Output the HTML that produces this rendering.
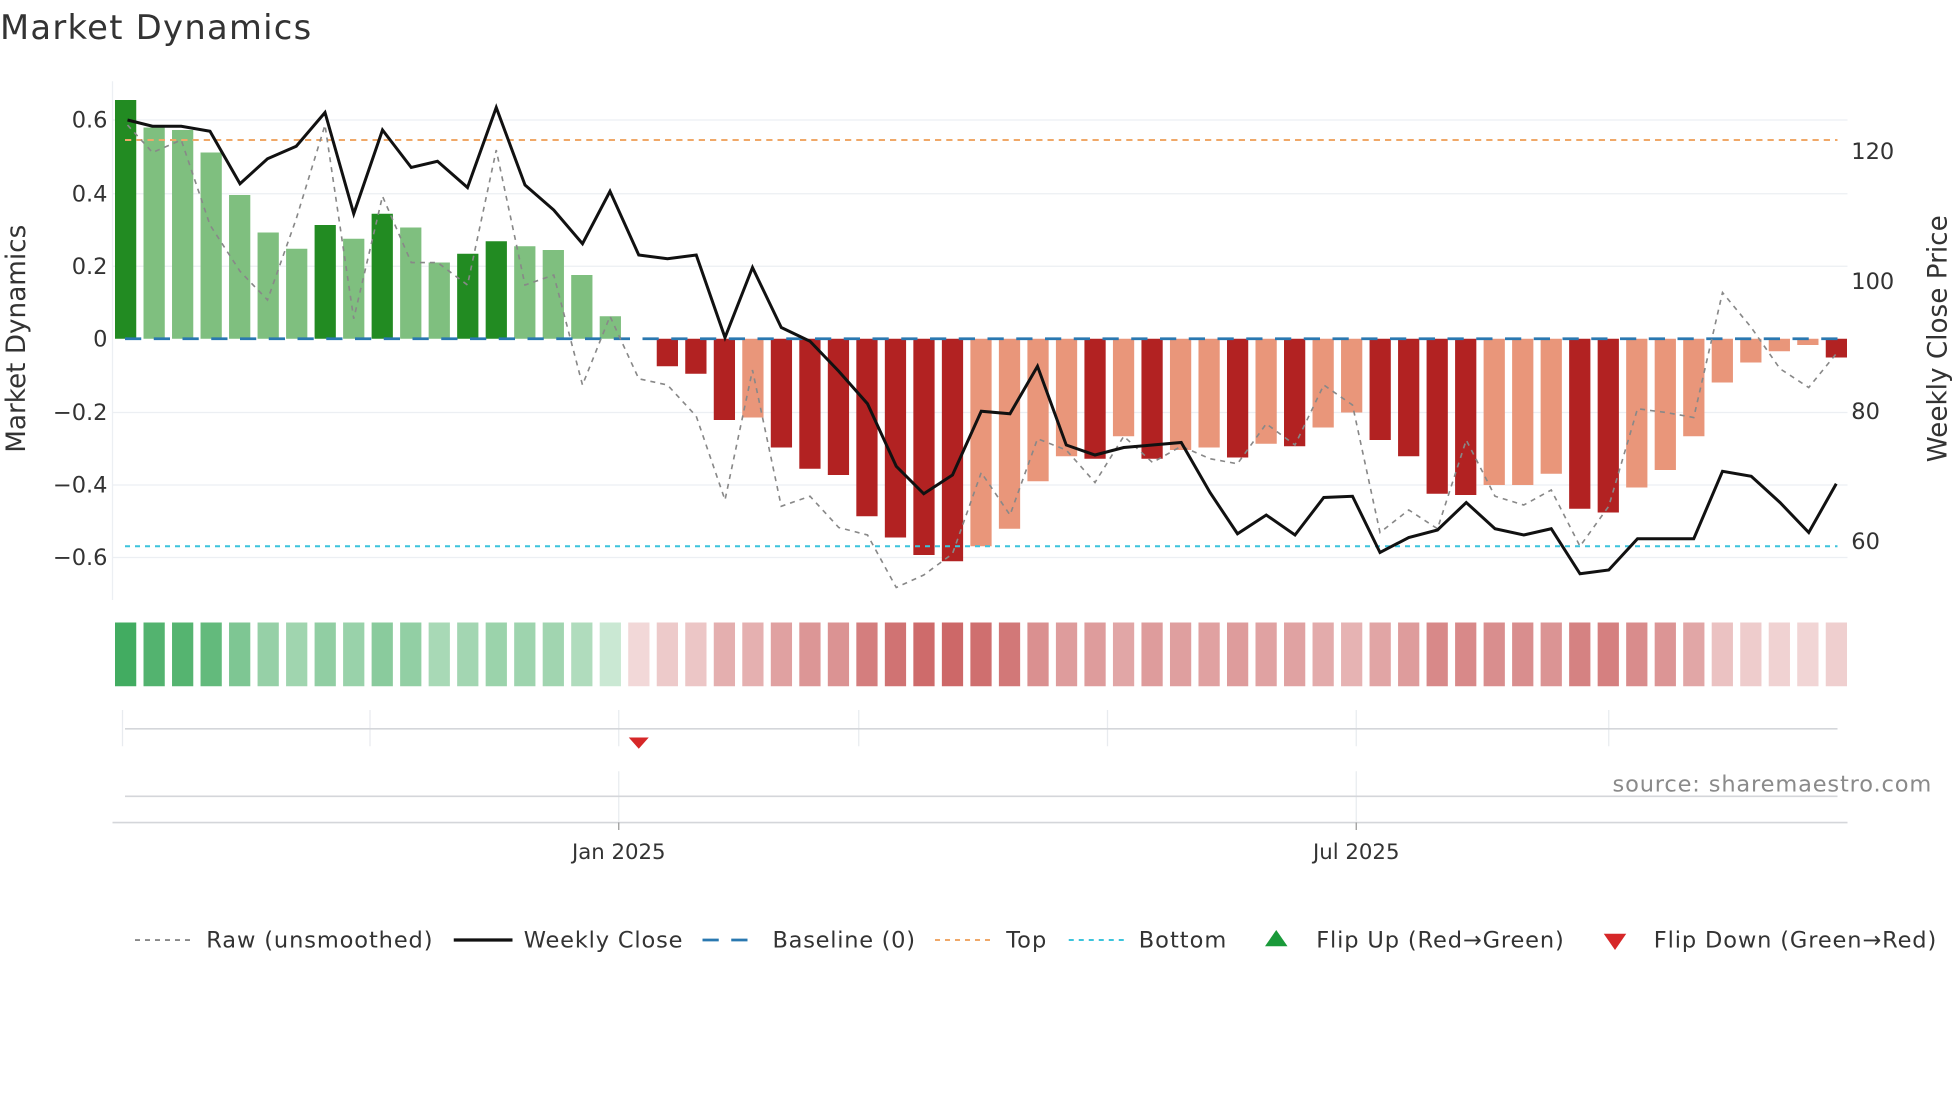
<!DOCTYPE html>
<html><head><meta charset="utf-8"><style>
html,body{margin:0;padding:0;background:#fff;width:1960px;height:1102px;overflow:hidden}
svg{display:block}
text{font-family:"DejaVu Sans","Liberation Sans",sans-serif;fill:#333}
</style></head><body>
<svg id="s" width="1960" height="1102" viewBox="0 0 1568 881.6" xmlns="http://www.w3.org/2000/svg">
<rect width="1568" height="882" fill="#fff"/>
<text x="0" y="31" font-size="27" textLength="249">Market Dynamics</text>
<g stroke="#eceff3" stroke-width="1">
<line x1="90" y1="96" x2="1478" y2="96"/><line x1="90" y1="155" x2="1478" y2="155"/>
<line x1="90" y1="213" x2="1478" y2="213"/><line x1="90" y1="330" x2="1478" y2="330"/>
<line x1="90" y1="388" x2="1478" y2="388"/><line x1="90" y1="446" x2="1478" y2="446"/>
<line x1="90" y1="65" x2="90" y2="480"/>
</g>
<g font-size="18" text-anchor="end">
<text x="86" y="102">0.6</text><text x="86" y="161">0.4</text><text x="86" y="219">0.2</text>
<text x="86" y="277">0</text><text x="86" y="336">−0.2</text><text x="86" y="394">−0.4</text><text x="86" y="452">−0.6</text>
</g>
<g font-size="18">
<text x="1481" y="127">120</text><text x="1481" y="231">100</text><text x="1481" y="335">80</text><text x="1481" y="439">60</text>
</g>
<text transform="translate(20,271) rotate(-90)" font-size="21" text-anchor="middle">Market Dynamics</text>
<text transform="translate(1557,271) rotate(-90)" font-size="21" text-anchor="middle">Weekly Close Price</text>
<g id="bars"></g>
<g id="heat"></g>
<line x1="100" y1="112" x2="1470" y2="112" stroke="#f0a868" stroke-width="1.6" stroke-dasharray="5,4"/>
<line x1="100" y1="437" x2="1470" y2="437" stroke="#3cc4dc" stroke-width="1.6" stroke-dasharray="4,4"/>
<line x1="100" y1="271" x2="1470" y2="271" stroke="#2a78b0" stroke-width="2.2" stroke-dasharray="13,10"/>
<polyline fill="none" stroke="#888" stroke-width="1.3" stroke-dasharray="4,4" points="102,100 122,122 145,112 168,180 192,217 214,240 237,175 260,100 283,255 306,157 329,210 350,210 374,228 397,120 420,228 443,220 466,308 488,253 511,303 534,308 557,333 580,400 602,296 625,405 648,397 671,422 694,428 717,470 739,460 762,443 785,378 808,412 830,351 853,360 876,386 899,349 922,370 945,357 968,367 990,371 1013,339 1036,356 1059,308 1082,324 1104,426 1127,408 1150,423 1173,352 1196,397 1219,404 1241,392 1264,437 1287,405 1310,327 1333,330 1355,334 1378,234 1401,262 1424,295 1447,310 1469,283"/>
<polyline fill="none" stroke="#111" stroke-width="2.4" stroke-linejoin="miter" points="102,96 122,101 145,101 168,105 192,147 214,127 237,117 260,90 283,171 306,104 329,134 350,129 374,150 397,86 420,148 443,168 466,195 488,153 511,204 534,207 557,204 580,270 602,214 625,262 648,273 671,297 694,323 717,373 739,395 762,380 785,329 808,331 830,293 853,356 876,364 899,358 922,356 945,354 968,394 990,427 1013,412 1036,428 1059,398 1082,397 1104,442 1127,430 1150,424 1173,402 1196,423 1219,428 1241,423 1264,459 1287,456 1310,431 1333,431 1355,431 1378,377 1401,381 1424,402 1447,426 1469,387"/>
<g stroke="#e8ebef" stroke-width="1">
<line x1="98" y1="568" x2="98" y2="597"/><line x1="296" y1="568" x2="296" y2="597"/><line x1="495" y1="568" x2="495" y2="597"/>
<line x1="687" y1="568" x2="687" y2="597"/><line x1="886" y1="568" x2="886" y2="597"/><line x1="1085" y1="568" x2="1085" y2="597"/><line x1="1287" y1="568" x2="1287" y2="597"/>
<line x1="495" y1="617" x2="495" y2="657"/><line x1="1085" y1="617" x2="1085" y2="657"/>
</g>
<line x1="100" y1="583" x2="1470" y2="583" stroke="#d4d6da" stroke-width="1.3"/>
<line x1="100" y1="637" x2="1470" y2="637" stroke="#d4d6da" stroke-width="1.3"/>
<line x1="90" y1="658" x2="1478" y2="658" stroke="#d4d6da" stroke-width="1.3"/>
<line x1="495" y1="658" x2="495" y2="664" stroke="#999"/><line x1="1085" y1="658" x2="1085" y2="664" stroke="#999"/>
<polygon points="503,590 519,590 511,599" fill="#d62728"/>
<text x="1545" y="633" font-size="18" text-anchor="end" style="fill:#8a8a8a" textLength="255">source: sharemaestro.com</text>
<text x="495" y="687" font-size="17" text-anchor="middle">Jan 2025</text>
<text x="1085" y="687" font-size="17" text-anchor="middle">Jul 2025</text>
<g font-size="18">
<line x1="108" y1="752" x2="153" y2="752" stroke="#888" stroke-width="1.5" stroke-dasharray="4,4"/>
<text x="165" y="758" textLength="181">Raw (unsmoothed)</text>
<line x1="363" y1="752" x2="410" y2="752" stroke="#111" stroke-width="2.6"/>
<text x="419" y="758" textLength="127">Weekly Close</text>
<line x1="562" y1="752" x2="607" y2="752" stroke="#2a78b0" stroke-width="2.2" stroke-dasharray="13,10"/>
<text x="618" y="758" textLength="114">Baseline (0)</text>
<line x1="748" y1="752" x2="793" y2="752" stroke="#f0a868" stroke-width="1.6" stroke-dasharray="4,4"/>
<text x="805" y="758" textLength="32">Top</text>
<line x1="855" y1="752" x2="900" y2="752" stroke="#3cc4dc" stroke-width="1.6" stroke-dasharray="4,4"/>
<text x="911" y="758" textLength="70">Bottom</text>
<polygon points="1012,757 1030,757 1021,744" fill="#1a9a3a"/>
<text x="1053" y="758" textLength="198">Flip Up (Red→Green)</text>
<polygon points="1283,747 1301,747 1292,760" fill="#d62728"/>
<text x="1323" y="758" textLength="226">Flip Down (Green→Red)</text>
</g>
</svg>
<script>
var d=[[80,1],[102,0],[104,0],[122,0],[156,0],[186,0],[199,0],[180,1],[191,0],[171,1],[182,0],[210,0],[203,1],[193,1],[197,0],[200,0],[220,0],[253,0],[271,0],[293,1],[299,1],[336,1],[334,0],[358,1],[375,1],[380,1],[413,1],[430,1],[444,1],[449,1],[437,0],[423,0],[385,0],[365,0],[367,1],[349,0],[367,1],[360,0],[358,0],[366,1],[355,0],[357,1],[342,0],[330,0],[352,1],[365,1],[395,1],[396,1],[388,0],[388,0],[379,0],[407,1],[410,1],[390,0],[376,0],[349,0],[306,0],[290,0],[281,0],[276,0],[286,1]];
var NS="http://www.w3.org/2000/svg",b=document.getElementById('bars'),h=document.getElementById('heat');
function r(g,x,y,w,ht,f){var e=document.createElementNS(NS,'rect');e.setAttribute('x',x);e.setAttribute('y',y);e.setAttribute('width',w);e.setAttribute('height',ht);e.setAttribute('fill',f);g.appendChild(e);}
d.forEach(function(v,i){var cx=100.5+i*22.81,x=cx-8.5,y=v[0],pos=y<271;
 var f=pos?(v[1]?'#228b22':'#7fbf7f'):(v[1]?'#b22222':'#e9967a');
 if(y!=271) r(b,x,Math.min(y,271),17,Math.abs(y-271),f);
 var m=Math.min(1,Math.abs(y-271)/191),a=0.18+0.7*m;
 var c=pos?'rgba(40,160,75,'+a+')':'rgba(190,60,60,'+(0.2+0.62*m)+')';
 r(h,x,498,17,51,c);});
</script>
</body></html>
